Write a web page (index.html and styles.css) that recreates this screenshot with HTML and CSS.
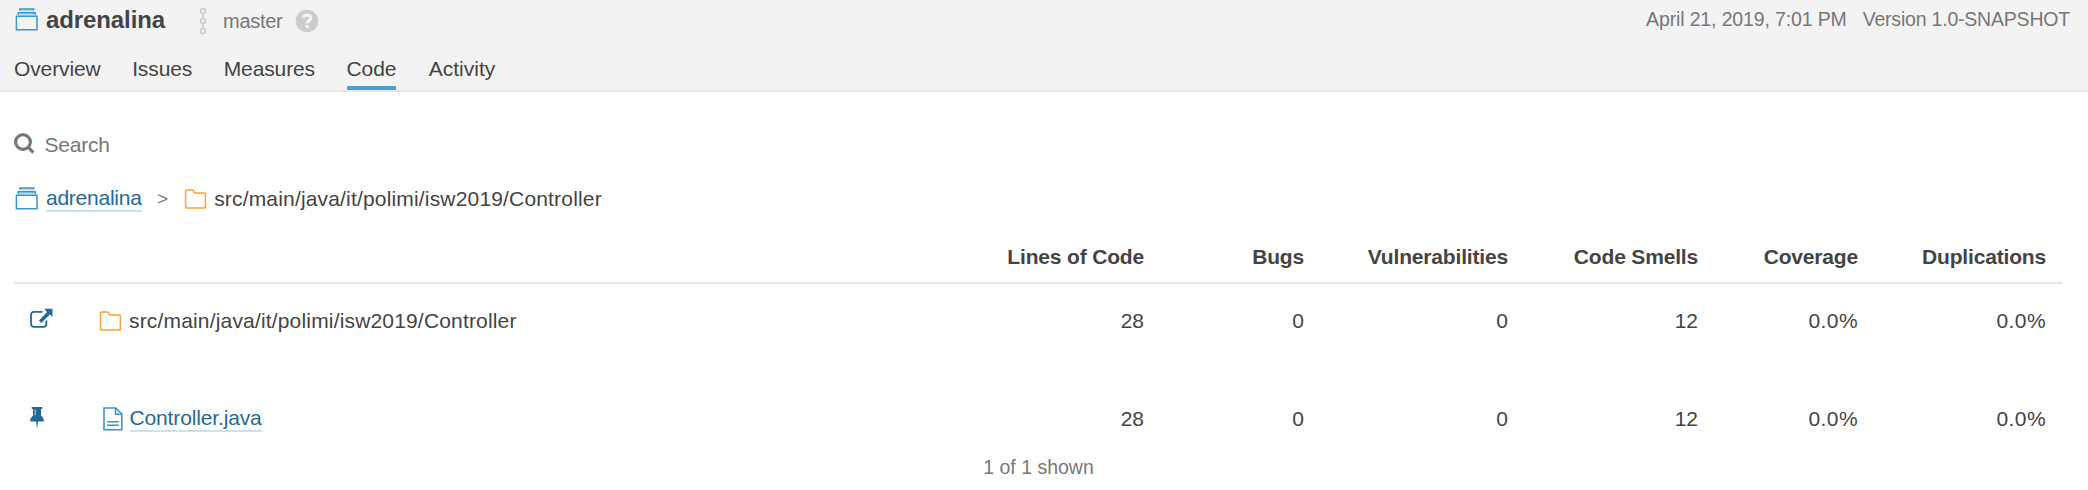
FILE: index.html
```html
<!DOCTYPE html>
<html lang="en">
<head>
<meta charset="utf-8">
<title>adrenalina - Code</title>
<link rel="stylesheet" href="styles.css">
</head>
<body>
<svg class="defs" width="0" height="0">
  <symbol id="project" viewBox="0 0 26 26"><path class="tint" d="M4 6H22V8.500H4ZM5.500 1.800H20V4.500H5.500Z"/><path class="outline" d="M2.400 9.200H23V22.700H2.400ZM4.200 7.700V5.700H21.300V7.700M5.900 3.600V1.900H19.700V3.600"/></symbol>
  <symbol id="folder" viewBox="0 0 22 20"><path d="M1 2.600C1 1.600 1.600 1 2.600 1H7.600C8.600 1 9.200 1.600 9.200 2.600C9.200 3.600 9.800 4 10.600 4H19.200C20.300 4 21 4.700 21 5.700V17.200C21 18.300 20.300 19 19.200 19H2.800C1.700 19 1 18.300 1 17.200Z"/></symbol>
</svg>
<header class="header">
  <div class="context">
    <svg class="icon-project"><use href="#project"/></svg>
    <h1 class="title">adrenalina</h1>
    <svg class="icon-branch" viewBox="0 0 8 28"><circle cx="4" cy="4" r="2.500"/><circle cx="4" cy="14" r="2.500"/><circle cx="4" cy="24" r="2.500"/><path d="M4 6.500V11.500M4 16.500V21.500"/></svg>
    <span class="branch">master</span>
    <svg class="icon-help" viewBox="0 0 24 24"><circle cx="12" cy="12" r="11.300"/><path d="M8.200 8.800C8.700 6.800 10 5.900 12 5.900C14.200 5.900 15.700 7.200 15.700 9C15.700 11.600 12.200 11.400 12.200 14.600"/><rect x="10.700" y="16" width="3" height="3"/></svg>
    <div class="meta"><span class="date">April 21, 2019, 7:01 PM</span><span class="version">Version 1.0-SNAPSHOT</span></div>
  </div>
  <nav class="tabs"><a>Overview</a><a>Issues</a><a>Measures</a><a class="active">Code</a><a>Activity</a></nav>
</header>
<main class="page">
  <div class="search">
    <svg class="icon-search" viewBox="0 0 22 22"><circle cx="9" cy="9" r="7.400"/><path d="M14.400 14.400L19.400 19.600"/></svg>
    <span>Search</span>
  </div>
  <div class="crumbs">
    <svg class="icon-project"><use href="#project"/></svg>
    <a class="link crumb-link">adrenalina</a>
    <span class="sep">&gt;</span>
    <svg class="icon-folder" viewBox="0 0 22 20"><use href="#folder"/></svg>
    <span class="path">src/main/java/it/polimi/isw2019/Controller</span>
  </div>
  <div class="row head">
    <span></span><span></span><span>Lines of Code</span><span>Bugs</span><span>Vulnerabilities</span><span>Code Smells</span><span>Coverage</span><span>Duplications</span>
  </div>
  <div class="row">
    <svg class="icon-open" viewBox="0 0 24 22"><path class="line" d="M12.500 3.800H4.200Q1 3.800 1 7V15.800Q1 18.900 4.200 18.900H13.300Q16.400 18.900 16.400 15.800V12.400"/><path d="M14.300 .8H22.500V9L19.900 6.400L11.400 14.900L9 12.500L17 4.100Z"/></svg>
    <div class="name"><svg class="icon-folder" viewBox="0 0 22 20"><use href="#folder"/></svg><span class="path">src/main/java/it/polimi/isw2019/Controller</span></div>
    <span>28</span><span>0</span><span>0</span><span>12</span><span class="pct">0.0%</span><span class="pct">0.0%</span>
  </div>
  <div class="row second">
    <svg class="icon-pin" viewBox="0 0 14 21"><path d="M2.500 0H11.500Q12.500 .2 12.500 1.100Q12.300 2 11 2.200V8.800Q13.800 10.400 13.900 14.400H8L7.200 21H6.800L6.200 14.400H.1Q.2 10.400 3 8.800V2.200Q1.700 2 1.500 1.100Q1.500 .2 2.500 0Z"/><path class="shine" d="M5.200 2.600V8.200"/></svg>
    <div class="name"><svg class="icon-file" viewBox="0 0 20 24"><path d="M1 1H12.800L18.800 7V22.800H1ZM12.600 1V7.200H18.800M4 14.800H15.800M4 18.200H15.800"/></svg><a class="link file-link">Controller.java</a></div>
    <span>28</span><span>0</span><span>0</span><span>12</span><span class="pct">0.0%</span><span class="pct">0.0%</span>
  </div>
  <footer class="shown">1 of 1 shown</footer>
</main>
</body>
</html>
```
FILE: styles.css
```css
* { box-sizing: border-box; }
body { margin: 0; background: #fff; color: #444; font: 21px/28px "Liberation Sans", Arial, sans-serif; }
svg { display: block; flex: none; }
.defs { position: absolute; }
.header { height: 92px; background: #f3f3f3; border-bottom: 2px solid #e6e6e6; }
.context { display: flex; align-items: center; height: 40px; padding: 0 18px 0 14px; margin-bottom: 7px; }
.icon-project { width: 26px; height: 26px; }
.tint { fill: #b7dbf0; }
.outline { fill: none; stroke: #3b94cb; stroke-width: 1.500; }
.title { margin: 0 0 0 6px; font-size: 24px; line-height: 40px; letter-spacing: -.1px; }
.icon-branch { width: 8px; height: 28px; margin: 2px 0 0 33.500px; fill: none; stroke: #ccc; stroke-width: 1.600; }
.branch { margin: 2px 0 0 16.500px; font-size: 20px; color: #777; letter-spacing: -.3px; }
.icon-help { width: 24px; height: 24px; margin: 2px 0 0 12.500px; fill: #ccc; }
.icon-help path { fill: none; stroke: #f3f3f3; stroke-width: 3; }
.icon-help rect { fill: #f3f3f3; }
.meta { display: flex; gap: 16px; margin: -2px 0 0 auto; font-size: 19.500px; color: #777; letter-spacing: -.2px; }
.date { letter-spacing: -.14px; }
.tabs { display: flex; gap: 31.500px; height: 43px; padding-left: 14px; line-height: 43px; letter-spacing: -.11px; }
.tabs .active { margin-right: 1px; box-shadow: inset 0 -4px #4b9fd5; }
.tabs a:last-child { letter-spacing: 0; }
.page { padding: 0 26px 0 14px; }
.search { display: flex; align-items: center; height: 32px; margin-top: 37px; color: #777; }
.search span { margin: -1px 0 0 8.500px; letter-spacing: -.2px; }
.icon-search { width: 22px; height: 22px; margin-top: -3px; fill: none; stroke: #777; stroke-width: 3.200; }
.crumbs { display: flex; align-items: center; height: 30px; margin-top: 23px; }
.link { color: #236a97; line-height: 24px; border-bottom: 2px solid #cae3f2; }
.crumb-link { margin: 0 0 0 6px; letter-spacing: -.25px; }
.sep { margin: 0 16px 0 15.500px; font-size: 19px; color: #777; }
.icon-folder { width: 23px; height: 20px; fill: none; stroke: #ff9f35; stroke-width: 1.700; }
.path { margin-left: 7px; letter-spacing: .17px; }
.row { display: grid; grid-template-columns: 85px 1fr 160px 160px 204px 190px 160px 188px; align-items: center; height: 74px; padding-right: 16px; text-align: right; }
.head { height: 54px; margin-top: 16px; padding-top: 1px; border-bottom: 2px solid #e6e6e6; font-weight: bold; letter-spacing: -.17px; }
.pct { letter-spacing: .4px; }
.name { display: flex; align-items: center; text-align: left; }
.second { margin-top: 24px; }
.icon-open { width: 24px; height: 22px; margin: -4px 0 0 16px; fill: #236a97; }
.icon-open .line { fill: none; stroke: #236a97; stroke-width: 1.800; }
.icon-pin { width: 14px; height: 21px; margin: -4px 0 0 16px; fill: #236a97; }
.shine { stroke: #fff; stroke-width: .8; }
.icon-file { width: 20px; height: 24px; margin-left: 4px; fill: none; stroke: #3b94cb; stroke-width: 1.600; }
.file-link { margin: 0 0 0 6.500px; letter-spacing: -.14px; }
.shown { padding-left: 1px; font-size: 19.500px; line-height: 22px; color: #777; text-align: center; }
```
